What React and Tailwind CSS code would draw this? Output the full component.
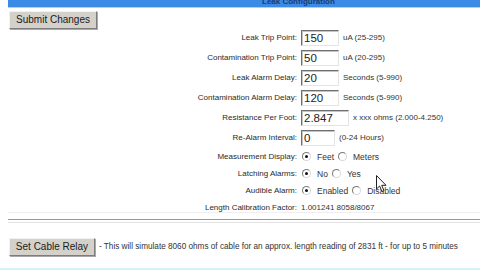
import React from "react";

const inputRows = [
  { label: "Leak Trip Point:", value: "150", w: "w-[38px]", unit: "uA (25-295)" },
  { label: "Contamination Trip Point:", value: "50", w: "w-[38px]", unit: "uA (20-295)" },
  { label: "Leak Alarm Delay:", value: "20", w: "w-[38px]", unit: "Seconds (5-990)" },
  { label: "Contamination Alarm Delay:", value: "120", w: "w-[38px]", unit: "Seconds (5-990)" },
  { label: "Resistance Per Foot:", value: "2.847", w: "w-[48px]", unit: "x xxx ohms (2.000-4.250)" },
  { label: "Re-Alarm Interval:", value: "0", w: "w-[34px]", unit: "(0-24 Hours)" },
];

const radioRows = [
  { label: "Measurement Display:", options: ["Feet", "Meters"] },
  { label: "Latching Alarms:", options: ["No", "Yes"] },
  { label: "Audible Alarm:", options: ["Enabled", "Disabled"] },
];

function Radio({ checked }) {
  return (
    <span className="w-[9px] h-[9px] rounded-full border border-t-[#7a7a7a] border-l-[#7a7a7a] border-b-[#d8d8d8] border-r-[#d8d8d8] bg-white flex items-center justify-center shrink-0">
      {checked && <span className="w-[3px] h-[3px] rounded-full bg-[#111]"></span>}
    </span>
  );
}

function Button({ children, w }) {
  return (
    <div
      className={`${w} h-[18px] bg-[#d4d1cb] border border-t-[#f2f2f2] border-l-[#f2f2f2] border-b-[#7d7d7d] border-r-[#7d7d7d] shadow-[1px_1px_0_#a8a8a8] flex items-center justify-center text-[10px] text-[#1a1a1a] leading-none`}
    >
      {children}
    </div>
  );
}

export default function App() {
  return (
    <div className="w-[480px] h-[270px] bg-white overflow-hidden relative font-['Liberation_Sans',Arial,sans-serif] text-[#2a2a2a]">
      <div className="ml-2 h-[8px] bg-[#3a8ae6] border-b border-[#a9d0f7] overflow-hidden">
        <div className="pl-[254px] -mt-[2px] text-[8px] font-bold text-[#1b3c74] leading-none">Leak Configuration</div>
      </div>

      <div className="ml-[9px] mt-[3px]">
        <Button w="w-[88px]">Submit Changes</Button>
      </div>

      <div className="grid grid-cols-[297px_1fr] gap-x-[4px] gap-y-[4px] mt-[1px]">
        {inputRows.map((r) => (
          <React.Fragment key={r.label}>
            <div className="h-[16px] flex items-center justify-end text-[8px] leading-none">{r.label}</div>
            <div className="h-[16px] flex items-center gap-[4px]">
              <input
                readOnly
                value={r.value}
                className={`${r.w} h-[16px] border border-t-[#6f6f6f] border-l-[#6f6f6f] border-b-[#e4e4e4] border-r-[#e4e4e4] shadow-[inset_1px_1px_0_#c4c4c4] bg-white pl-[2px] text-[11.5px] text-[#222] leading-none outline-none`}
              />
              <span className="text-[8px] leading-none text-[#333]">{r.unit}</span>
            </div>
          </React.Fragment>
        ))}
      </div>

      <div className="grid grid-cols-[297px_1fr] gap-x-[4px] mt-[2px]">
        {radioRows.map((r) => (
          <React.Fragment key={r.label}>
            <div className="h-[17px] flex items-center justify-end text-[8px] leading-none">{r.label}</div>
            <div className="h-[17px] flex items-center">
              <span className="ml-[1px]"><Radio checked /></span>
              <span className="ml-[6px] mt-[2px] text-[8.5px] leading-none text-[#333]">{r.options[0]}</span>
              <span className="ml-[4px]"><Radio /></span>
              <span className="ml-[6px] mt-[2px] text-[8.5px] leading-none text-[#333]">{r.options[1]}</span>
            </div>
          </React.Fragment>
        ))}
        <div className="h-[17px] flex items-center justify-end text-[8px] leading-none">Length Calibration Factor:</div>
        <div className="h-[17px] flex items-center text-[8px] leading-none text-[#333]">1.001241 8058/8067</div>
      </div>

      <div className="ml-2 h-px bg-[#efefef] -mt-[4px]"></div>
      <div className="ml-2 mt-[6px] h-px bg-[#9a9a9a]"></div>
      <div className="ml-2 mt-[2px] h-px bg-[#e2e2e2]"></div>

      <div className="ml-[9px] mt-[15px] flex items-center gap-[4px]">
        <Button w="w-[86px]">Set Cable Relay</Button>
        <span className="text-[8.2px] leading-none text-[#333]">
          - This will simulate 8060 ohms of cable for an approx. length reading of 2831 ft - for up to 5 minutes
        </span>
      </div>

      <div className="absolute left-0 right-0 bottom-0 h-[2px] bg-[#d6f1fb]"></div>

      <svg className="absolute left-[376px] top-[175px]" width="12" height="18" viewBox="0 0 12 18">
        <path d="M0.5 0.5 L0.5 14 L3.6 11 L6 16.5 L8 15.6 L5.7 10.3 L10 10.3 Z" fill="#fff" stroke="#222" strokeWidth="1" strokeLinejoin="round" />
      </svg>
    </div>
  );
}
